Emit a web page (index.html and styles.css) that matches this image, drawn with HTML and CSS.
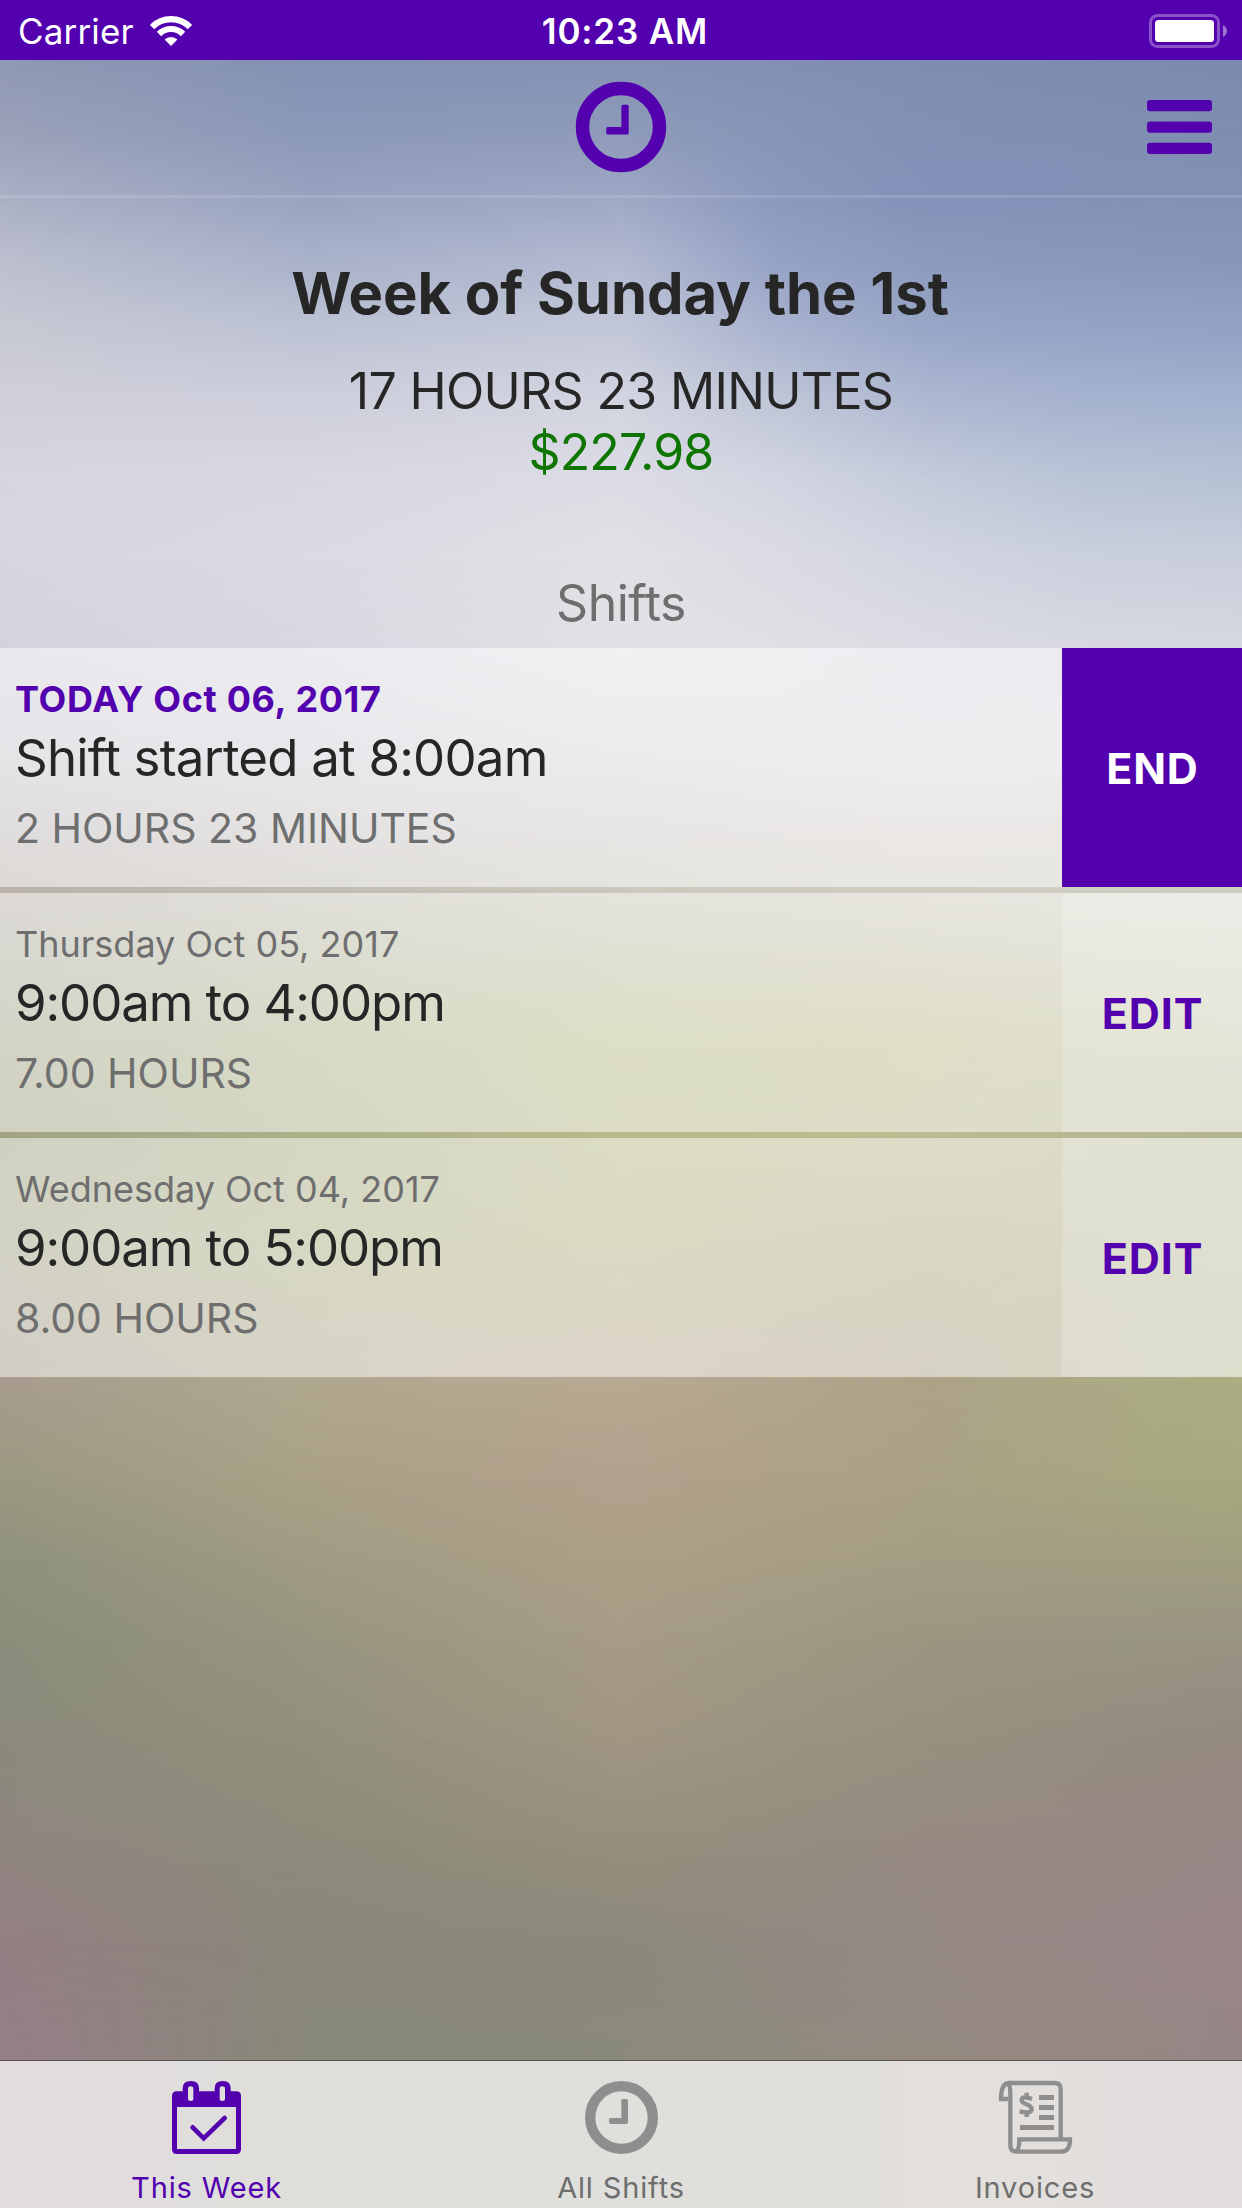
FILE: index.html
```html
<!DOCTYPE html>
<html lang="en">
<head>
<meta charset="utf-8">
<title>This Week</title>
<link rel="stylesheet" href="styles.css">
</head>
<body>
<div class="screen">
  <div class="backdrop" aria-hidden="true">
    <div class="band b1"></div><div class="band b2"></div><div class="band b3"></div><div class="band b4"></div>
    <div class="band b5"></div><div class="band b6"></div><div class="band b7"></div><div class="band b8"></div>
    <div class="band b9"></div><div class="band b10"></div><div class="band b11"></div><div class="band b12"></div>
    <div class="band b13"></div><div class="band b14"></div><div class="band b15"></div><div class="band b16"></div>
    <div class="band b17"></div><div class="band b18"></div><div class="band b19"></div><div class="band b20"></div>
    <div class="band b21"></div><div class="band b22"></div><div class="band b23"></div><div class="band b24"></div>
  </div>

  <div class="statusbar">
    <div class="status-left">
      <span class="carrier">Carrier</span>
      <svg class="wifi" width="42" height="30" viewBox="150 15 42 30"><path d="M152.05 26.05a26.8 26.8 0 0 1 37.9 0M158.98 32.98a17 17 0 0 1 24.04 0" fill="none" stroke="#fff" stroke-width="6.2"/><path d="M171 45l-6.4-6.4a9 9 0 0 1 12.8 0z" fill="#fff"/></svg>
    </div>
    <span class="time">10:23 AM</span>
    <div class="status-right">
      <svg width="78" height="34" viewBox="0 0 78 34"><rect x="1.5" y="1.5" width="68" height="31" rx="7" fill="none" stroke="#fff" stroke-opacity=".32" stroke-width="3"/><rect x="6" y="6" width="59" height="22" rx="3.5" fill="#fff"/><path d="M74 11c2.600 1.500 4 3.500 4 6s-1.400 4.500-4 6z" fill="#fff" fill-opacity=".45"/></svg>
    </div>
  </div>

  <header class="navbar">
    <svg class="logo" width="92" height="92" viewBox="0 0 92 92"><circle cx="46" cy="46" r="38.500" fill="none" stroke="#5300af" stroke-width="13.400"/><path d="M48 23.700h4.200q1.500 0 1.500 1.500v26.700q0 1.500-1.500 1.500H32.700q-1.500 0-1.500-1.500V47.500q0-1.500 1.500-1.500H46.400V25.200q0-1.500 1.600-1.500z" fill="#5300af"/></svg>
    <svg class="menu" width="65" height="54" viewBox="0 0 65 54"><g fill="#5300af"><rect width="65" height="11.200" rx="3"/><rect y="21.500" width="65" height="11.200" rx="3"/><rect y="42.800" width="65" height="11.200" rx="3"/></g></svg>
  </header>

  <section class="summary">
    <h1 class="title">Week of Sunday the 1st</h1>
    <div class="total">17 HOURS 23 MINUTES</div>
    <div class="earned">$227.98</div>
    <h2 class="subtitle">Shifts</h2>
  </section>

  <ul class="shifts">
    <li class="shift">
      <div class="info">
        <div class="date today">TODAY Oct 06, 2017</div>
        <div class="period open">Shift started at 8:00am</div>
        <div class="hours">2 HOURS 23 MINUTES</div>
      </div>
      <div class="action end">END</div>
    </li>
    <li class="shift">
      <div class="info">
        <div class="date">Thursday Oct 05, 2017</div>
        <div class="period">9:00am to 4:00pm</div>
        <div class="hours">7.00 HOURS</div>
      </div>
      <div class="action edit">EDIT</div>
    </li>
    <li class="shift">
      <div class="info">
        <div class="date">Wednesday Oct 04, 2017</div>
        <div class="period">9:00am to 5:00pm</div>
        <div class="hours">8.00 HOURS</div>
      </div>
      <div class="action edit">EDIT</div>
    </li>
  </ul>

  <nav class="tabbar">
    <div class="tab active">
      <svg width="71" height="75" viewBox="213 90 213 225"><path fill="#5300af" fill-rule="evenodd" d="M230 124h18v-9q0-22 24.500-22t24.500 22v9h47v-9q0-22 24-22t24 22v9h17q14 0 14 14v160q0 14-14 14H230q-14 0-14-14V138q0-14 14-14zM231 171v126h177V171zM264 114v34q0 5 8 5t8-5v-34q0-5-8-5t-8 5zM359 114v34q0 5 8 5t8-5v-34q0-5-8-5t-8 5z"/><path d="M278 232l33 33 63-61" fill="none" stroke="#5300af" stroke-width="14" stroke-linecap="round"/></svg>
      <span class="label">This Week</span>
    </div>
    <div class="tab">
      <svg width="75" height="75" viewBox="189 90 225 225"><circle cx="301.500" cy="202.500" r="94" fill="none" stroke="#8e8e8e" stroke-width="31"/><path d="M306 147h10q5 0 5 5v65q0 5-5 5h-47q-5 0-5-5v-8q0-5 5-5h32v-52q0-5 5-5z" fill="#8e8e8e"/></svg>
      <span class="label">All Shifts</span>
    </div>
    <div class="tab">
      <svg width="75" height="75" viewBox="174 93 225 225"><g fill="none" stroke="#8e8e8e" stroke-width="13"><path d="M206 102h138q18 0 18 18v147"/><path d="M204 150h-21q0-47 24-48"/><path d="M204 104q7 6 7 30v155q0 19 18 19h136q25 0 25-37H238q0 37-14 37"/></g><g fill="#8e8e8e"><path d="M297 138h45v15h-45zM297 168h45v15h-45zM297 198h45v15h-45zM240 228h102v15H240z"/></g><path d="M276 150q-31-12-31 4 0 7 14 12 16 6 16 14 0 16-36 7M260 131v14M260 188v16" fill="none" stroke="#8e8e8e" stroke-width="13"/></svg>
      <span class="label">Invoices</span>
    </div>
  </nav>
</div>
</body>
</html>
```
FILE: styles.css
```css
* { box-sizing: border-box; }
body {
  margin: 0;
  font-family: Inter, "Liberation Sans", sans-serif;
  color: #262626;
}
.screen {
  position: relative;
  width: 1242px;
  height: 2208px;
  display: flex;
  flex-direction: column;
  overflow: hidden;
}

/* Backdrop: each band fades in over --h, starting at --y */
.backdrop { position: absolute; inset: 0; background: #8490b2; z-index: -1; }
.band {
  position: absolute;
  inset: var(--y) 0 0 0;
  background: linear-gradient(90deg, var(--c));
  -webkit-mask-image: linear-gradient(transparent 0, #000 var(--h));
  mask-image: linear-gradient(transparent 0, #000 var(--h));
}
.b1 { --y: 0px; --h: 60px; --c: #8f98b4, #8492b4, #8592b4, #7f8db2, #7d8ab0; }
.b2 { --y: 60px; --h: 70px; --c: #9aa1b8, #8b98b8, #8e9ab9, #8290b5, #7f8db1; }
.b3 { --y: 130px; --h: 65px; --c: #aaafc4 0%, #98a2bf 25%, #9ea7c4 50%, #8b99bd 62.5%, #8292b8 75%, #8292b7 87.5%, #8391b5 100%; }
.b4 { --y: 195px; --h: 65px; --c: #bbbfce 0%, #a9b2ca 25%, #b2b9d0 50%, #95a2c5 62.5%, #8c9abd 75%, #8998bc 87.5%, #8797bb 100%; }
.b5 { --y: 260px; --h: 70px; --c: #c7c9d3 0%, #bdc3d4 25%, #c3c8d8 50%, #a9b3cf 62.5%, #98a6c7 75%, #95a4c6 87.5%, #94a3c5 100%; }
.b6 { --y: 330px; --h: 70px; --c: #d0cfda 0%, #cecfdc 25%, #d2d4e0 50%, #bfc6d7 62.5%, #adb7d1 75%, #a6b3cf 87.5%, #a4b2cf 100%; }
.b7 { --y: 400px; --h: 80px; --c: #d7d5df 0%, #d8d8e2 25%, #dcdce5 50%, #d2d5e1 62.5%, #c4cbda 75%, #b9c4d6 87.5%, #b6c2d4 100%; }
.b8 { --y: 480px; --h: 80px; --c: #d8d5df 0%, #dbd9e3 25%, #e1e1e5 50%, #dbdbe4 62.5%, #d2d5e1 75%, #cbd0dd 87.5%, #cacfdc 100%; }
.b9 { --y: 560px; --h: 85px; --c: #d5d2dc 0%, #d9d7e0 25%, #e3e1e6 50%, #e0dfe5 62.5%, #dbdbe3 75%, #d7d8e1 87.5%, #d5d7e0 100%; }
.b10 { --y: 645px; --h: 115px; --c: #cbc7cd, #d1cfd6, #d7d6da, #dcdce1, #d9d9dd; }
.b11 { --y: 760px; --h: 80px; --c: #bdb8b7, #c8c3c2, #cfcbc7, #d5cfcb, #d3cfc9; }
.b12 { --y: 840px; --h: 50px; --c: #bbb3ab, #c1bdb3, #cac8bb, #cfccc0, #d0cfc5; }
.b13 { --y: 890px; --h: 70px; --c: #afae9f, #b8bba1, #c0c1a5, #c6c4a9, #c8c8b4; }
.b14 { --y: 960px; --h: 80px; --c: #a7a98d, #afb58d, #babe8c, #bfbd8f, #bcc09f; }
.b15 { --y: 1040px; --h: 95px; --c: #a1a383, #abb089, #b9ba8b, #bbbc91, #b2b492; }
.b16 { --y: 1135px; --h: 105px; --c: #a5a589, #adb187, #b5b485, #b3ae87, #afb48b; }
.b17 { --y: 1240px; --h: 140px; --c: #a79c8e, #b0a88f, #b8a992, #ada389, #aaae82; }
.b18 { --y: 1380px; --h: 100px; --c: #9b9881, #a9a187, #b3a08c, #aaa286, #a6a97e; }
.b19 { --y: 1480px; --h: 80px; --c: #8f927d, #a09b83, #aca087, #a39d84, #a09e80; }
.b20 { --y: 1560px; --h: 80px; --c: #8a8e7b, #989580, #a69c86, #9a9681, #999484; }
.b21 { --y: 1640px; --h: 100px; --c: #8b8a7b, #92907c, #a09683, #97907f, #94897f; }
.b22 { --y: 1740px; --h: 100px; --c: #8f8680, #8e8b7b, #968f7d, #968a82, #978886; }
.b23 { --y: 1840px; --h: 100px; --c: #947f83, #8a887a, #8c897b, #958985, #9a8688; }
.b24 { --y: 1940px; --h: 120px; --c: #967e88, #878878, #8a8a7c, #948a80, #968585; }

.statusbar {
  height: 60px;
  padding: 0 15px 0 18px;
  display: grid;
  grid-template-columns: 1fr auto 1fr;
  align-items: center;
  background: #5300af;
  color: #fff;
}
.status-left { display: flex; align-items: center; gap: 16px; }
.status-right { display: flex; justify-content: flex-end; }
.carrier { font-size: 35px; line-height: 60px; letter-spacing: .15px; padding-top: 1px; }
.time { font-size: 35px; line-height: 60px; font-weight: 600; letter-spacing: .85px; padding: 1px 0 0 5px; }

.navbar {
  height: 138px;
  padding: 0 30px 2px 575px;
  display: flex;
  align-items: center;
  justify-content: space-between;
  border-bottom: 3px solid rgba(255, 255, 255, .13);
}

.summary { height: 450px; text-align: center; padding-top: 55px; }
.title { margin: 0 2px 0 0; font-size: 58px; line-height: 80px; font-weight: 700; letter-spacing: -.05px; }
.total { margin-top: 27px; font-size: 50px; line-height: 62px; letter-spacing: -.65px; }
.earned { font-size: 50px; line-height: 60px; letter-spacing: -.9px; color: #0e7600; }
.subtitle { margin: 90px 0 0; font-size: 50px; line-height: 62px; font-weight: 400; letter-spacing: -.5px; color: #6e6e6e; }

.shifts { margin: 0; padding: 0; list-style: none; display: flex; flex-direction: column; gap: 6px; }
.shift { height: 239px; display: flex; background: rgba(255, 255, 255, .5); }
.info { flex: 1; padding: 29px 0 0 15px; }
.date { font-size: 36px; line-height: 44px; color: #6e6e6e; }
.today { font-weight: 700; letter-spacing: .7px; color: #5300af; }
.period { margin-top: 5px; font-size: 51px; line-height: 64px; letter-spacing: -1.1px; }
.open { letter-spacing: -.8px; }
.hours { margin-top: 13px; font-size: 41px; line-height: 50px; color: #6e6e6e; }
.action {
  width: 180px;
  padding-left: 1px;
  display: flex;
  align-items: center;
  justify-content: center;
  font-size: 43px;
  font-weight: 700;
  letter-spacing: .9px;
}
.end { background: #5300af; color: #fff; }
.edit { background: rgba(255, 255, 255, .2); color: #5300af; }

.tabbar {
  margin-top: auto;
  height: 148px;
  display: grid;
  grid-template-columns: repeat(3, 1fr);
  background: rgba(255, 255, 255, .73);
  border-top: 1px solid #5c5252;
  background-clip: padding-box;
}
.tab { display: flex; flex-direction: column; align-items: center; padding-top: 19px; color: #6e6e6e; }
.active { padding-right: 1px; color: #5300af; }
.label { margin-top: 13px; font-size: 29px; line-height: 40px; letter-spacing: .85px; }
```
